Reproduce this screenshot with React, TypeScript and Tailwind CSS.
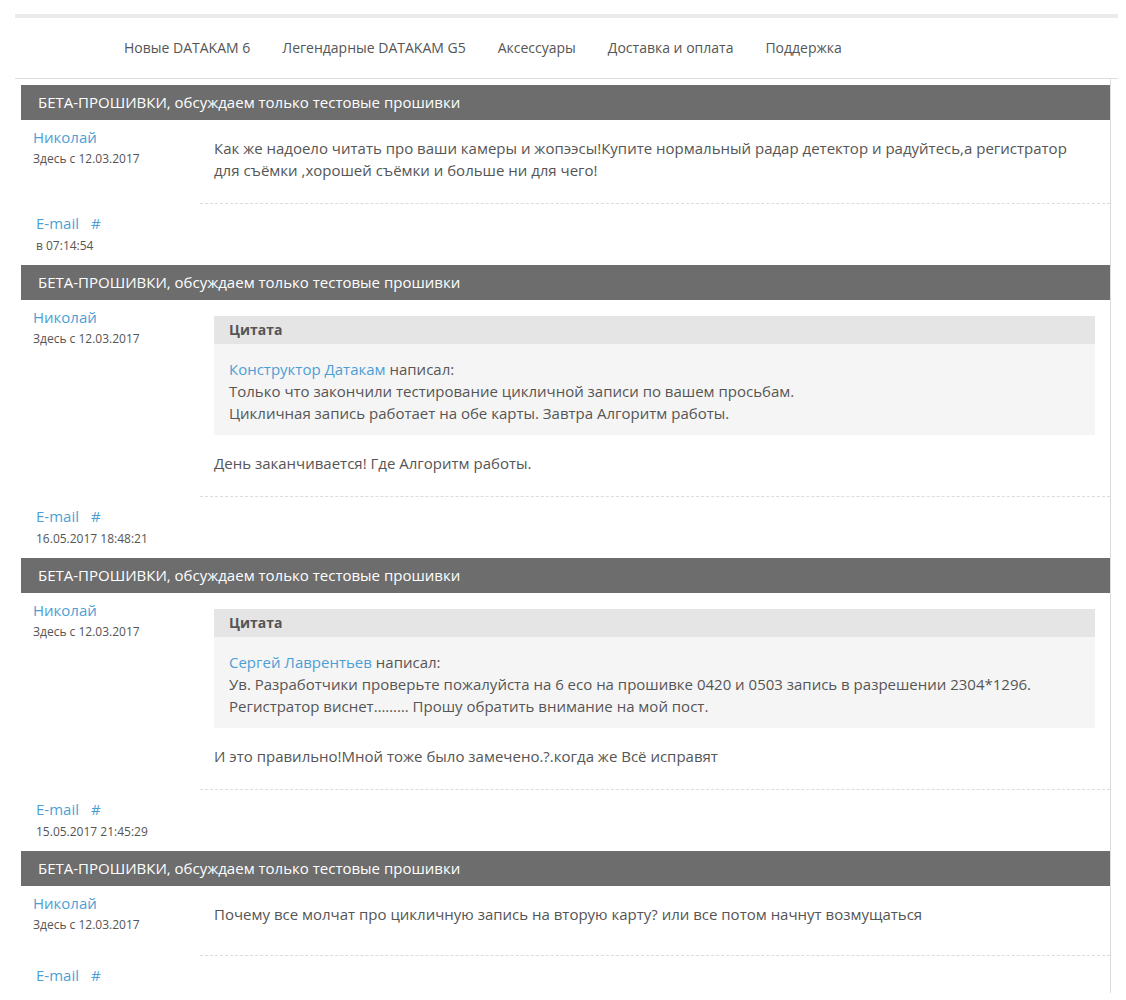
import React from 'react';

interface Quote {
  author: string;
  lines: string[];
}

interface Post {
  author: string;
  since: string;
  quote?: Quote;
  text: string[];
  time?: string;
}

const nav = ['Новые DATAKAM 6', 'Легендарные DATAKAM G5', 'Аксессуары', 'Доставка и оплата', 'Поддержка'];

const title = 'БЕТА-ПРОШИВКИ, обсуждаем только тестовые прошивки';

const posts: Post[] = [
  {
    author: 'Николай',
    since: 'Здесь с 12.03.2017',
    text: [
      'Как же надоело читать про ваши камеры и жопээсы!Купите нормальный радар детектор и радуйтесь,а регистратор для съёмки ,хорошей съёмки и больше ни для чего!',
    ],
    time: 'в 07:14:54',
  },
  {
    author: 'Николай',
    since: 'Здесь с 12.03.2017',
    quote: {
      author: 'Конструктор Датакам',
      lines: [
        'Только что закончили тестирование цикличной записи по вашем просьбам.',
        'Цикличная запись работает на обе карты. Завтра Алгоритм работы.',
      ],
    },
    text: ['День заканчивается! Где Алгоритм работы.'],
    time: '16.05.2017 18:48:21',
  },
  {
    author: 'Николай',
    since: 'Здесь с 12.03.2017',
    quote: {
      author: 'Сергей Лаврентьев',
      lines: [
        'Ув. Разработчики проверьте пожалуйста на 6 eco на прошивке 0420 и 0503 запись в разрешении 2304*1296.',
        'Регистратор виснет……… Прошу обратить внимание на мой пост.',
      ],
    },
    text: ['И это правильно!Мной тоже было замечено.?.когда же Всё исправят'],
    time: '15.05.2017 21:45:29',
  },
  {
    author: 'Николай',
    since: 'Здесь с 12.03.2017',
    text: ['Почему все молчат про цикличную запись на вторую карту? или все потом начнут возмущаться'],
  },
];

function PostBlock({ post }: { post: Post }) {
  return (
    <div>
      <div className="h-[35px] bg-[#6d6d6d] text-white text-[15px] leading-[35px] pl-[17px]">{title}</div>
      <div className="flex">
        <div className="w-[179px] shrink-0 pl-[12px] pt-[7px]">
          <a className="block text-[15px] leading-[20px] text-[#4c9fd6]">{post.author}</a>
          <div className="text-[12px] leading-[24px] text-[#555]">{post.since}</div>
        </div>
        <div className="flex-1 min-h-[70px] pl-[14px] pr-[15px] pt-[17px] pb-[22px] border-b border-dashed border-[#dcdcdc]">
          {post.quote && (
            <div className="mt-[-1px] mb-[17px]">
              <div className="h-[28px] bg-[#e5e5e5] pl-[15px] text-[14px] font-bold leading-[28px] text-[#555]">Цитата</div>
              <div className="bg-[#f5f5f5] pl-[15px] pr-[15px] pt-[14px] pb-[11px] text-[15px] leading-[22px] text-[#555]">
                <div>
                  <a className="text-[#4c9fd6]">{post.quote.author}</a> написал:
                </div>
                {post.quote.lines.map((l, i) => (
                  <div key={i}>{l}</div>
                ))}
              </div>
            </div>
          )}
          {post.text.map((t, i) => (
            <p key={i} className="text-[15px] leading-[22px] text-[#555] pr-[20px]">
              {t}
            </p>
          ))}
        </div>
      </div>
      <div className="pl-[15px] pt-[8px] pb-[7px]">
        <div className="flex gap-[12px] text-[15px] leading-[22px] text-[#4c9fd6]">
          <a>E-mail</a>
          <a>#</a>
        </div>
        {post.time && <div className="text-[12px] leading-[24px] text-[#555]">{post.time}</div>}
      </div>
    </div>
  );
}

export default function App() {
  return (
    <div className="bg-white min-h-screen pt-[14px]" style={{ fontFamily: '"Open Sans", "Noto Sans", sans-serif' }}>
      <div className="ml-[15px] w-[1103px]">
        <div className="h-[4px] bg-[#ebebeb]" />
        <nav className="h-[61px] flex items-center pl-[109px] gap-[32px] pb-[2px] border-b border-[#dedede] text-[14px] text-[#555]">
          {nav.map((n) => (
            <a key={n}>{n}</a>
          ))}
        </nav>
      </div>
      <div className="ml-[15px] w-[1096px] pl-[6px] pt-[6px] border-r border-[#dcdcdc]">
        {posts.map((p, i) => (
          <PostBlock key={i} post={p} />
        ))}
      </div>
    </div>
  );
}
